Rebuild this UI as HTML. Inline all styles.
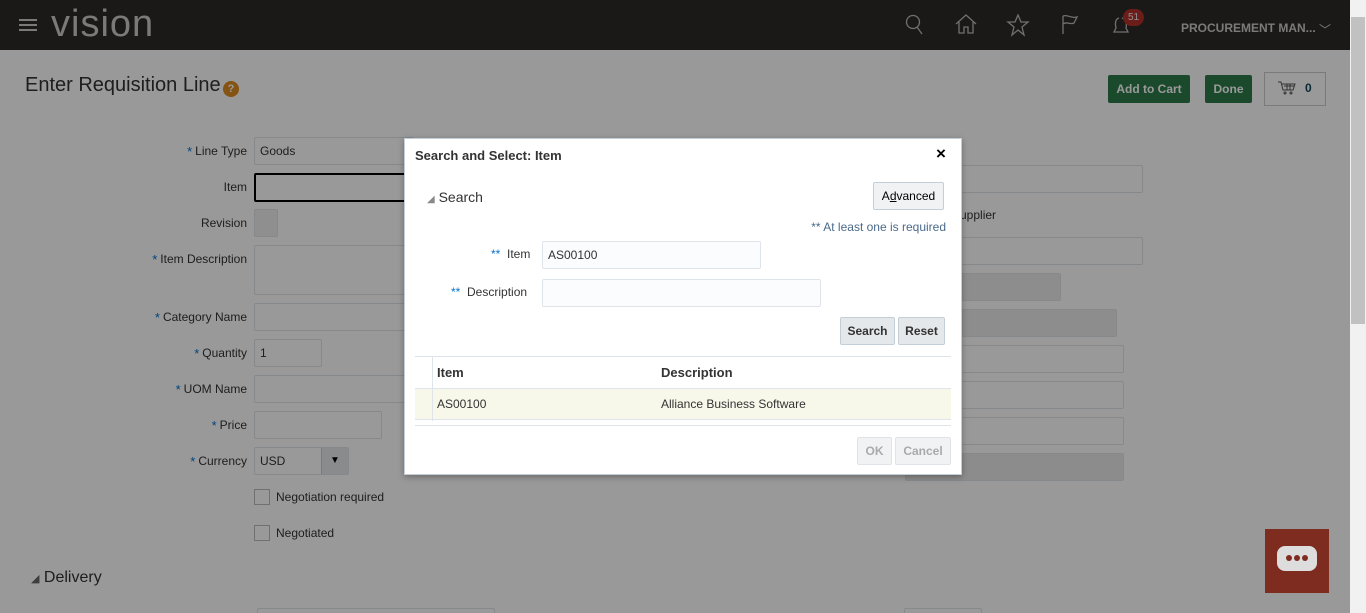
<!DOCTYPE html>
<html><head><meta charset="utf-8"><style>
*{box-sizing:border-box;margin:0;padding:0}
html,body{width:1366px;height:613px;overflow:hidden}
body{font-family:"Liberation Sans",sans-serif;background:#fff;position:relative;color:#333}
.hdr{position:absolute;left:0;top:0;width:1350px;height:50px;background:#2d2a28}
.abs{position:absolute}
.lbl{position:absolute;font-size:12px;color:#333;text-align:right;width:200px}
.lbl b{color:#0572ce;font-weight:normal;font-size:13px;vertical-align:top;margin-right:3px}
.inp{position:absolute;border:1px solid #dfe4ea;background:#fff;border-radius:2px;font-size:12px;padding:6px 5px}
.ov{position:absolute;left:0;top:0;width:1350px;height:613px;background:rgba(0,0,0,.4)}
.dlg{position:absolute;left:404px;top:138px;width:558px;height:337px;background:#fff;border:1px solid #c4ced7;box-shadow:0 2px 6px rgba(0,0,0,.3)}
.btn{position:absolute;border:1px solid #c4ced7;background:#e4e8ea;border-radius:2px;font-size:12px;font-weight:bold;color:#333;text-align:center;line-height:26px}
</style></head><body>
<div class="hdr">
 <div class="abs" style="left:19px;top:19px;width:18px;height:2px;background:#ccc;box-shadow:0 5px 0 #ccc,0 10px 0 #ccc"></div>
 <div class="abs" style="left:51px;top:2px;font-size:38px;color:#ccc;line-height:44px;letter-spacing:1px">vision</div>
 <svg class="abs" style="left:900px;top:12px" width="330" height="26" fill="none" stroke="#bbb" stroke-width="1.3">
  <circle cx="13" cy="10" r="6.5"/><path d="M17 15l5 7"/>
  <path d="M56 12l10-9 10 9M59 10v11h5v-6h4v6h5V10"/>
  <path d="M118 3l3 7h7l-6 5 2 8-6-5-6 5 2-8-6-5h7z"/>
  <path d="M163 4v18M163 4c5-2 8 3 14 1l-3 6c-4 2-7-2-11 1"/>
  <path d="M219 6c-4 1-4 6-3 10l-2 4h14l-2-4c1-4 0-9-4-10"/>
 </svg>
 <div class="abs" style="left:1123px;top:9px;width:21px;height:17px;border-radius:9px;background:#b5312a;color:#eee;font-size:10px;text-align:center;line-height:17px">51</div>
 <div class="abs" style="left:1181px;top:19px;font-size:12px;font-weight:bold;color:#ccc">PROCUREMENT MAN... <span style="font-weight:normal;position:relative;top:2px">﹀</span></div>
</div>
<div class="abs" style="left:25px;top:74px;font-size:20px;color:#333">Enter Requisition Line</div>
<div class="abs" style="left:223px;top:81px;width:16px;height:16px;border-radius:50%;background:#e08c1e;color:#fff;font-size:11px;font-weight:bold;text-align:center;line-height:16px">?</div>
<div class="abs" style="left:1108px;top:75px;width:82px;height:28px;background:#2d7a4a;border-radius:2px;color:#fff;font-size:12px;font-weight:bold;text-align:center;line-height:28px">Add to Cart</div>
<div class="abs" style="left:1205px;top:75px;width:47px;height:28px;background:#2d7a4a;border-radius:2px;color:#fff;font-size:12px;font-weight:bold;text-align:center;line-height:28px">Done</div>
<div class="abs" style="left:1264px;top:72px;width:62px;height:34px;border:1px solid #ccc;font-size:12px;font-weight:bold;color:#145;padding:8px 0 0 40px">0</div>
<svg class="abs" style="left:1277px;top:80px" width="20" height="16" fill="none" stroke="#555" stroke-width="1"><path d="M1 2h3l2 8h10l2-6H5M7 6h10M10 4v6M13 4v6"/><circle cx="8" cy="13" r="1"/><circle cx="14" cy="13" r="1"/></svg>

<div class="lbl" style="left:47px;top:144px"><b>*</b>Line Type</div><div class="inp" style="left:254px;top:137px;width:160px;height:28px">Goods</div>
<div class="lbl" style="left:47px;top:180px">Item</div><div class="inp" style="left:254px;top:173px;width:160px;height:29px;border:2px solid #000"></div>
<div class="lbl" style="left:47px;top:216px">Revision</div><div class="inp" style="left:254px;top:209px;width:24px;height:28px;background:#eee"></div>
<div class="lbl" style="left:47px;top:252px"><b>*</b>Item Description</div><div class="inp" style="left:254px;top:245px;width:160px;height:50px"></div>
<div class="lbl" style="left:47px;top:310px"><b>*</b>Category Name</div><div class="inp" style="left:254px;top:303px;width:160px;height:28px"></div>
<div class="lbl" style="left:47px;top:346px"><b>*</b>Quantity</div><div class="inp" style="left:254px;top:339px;width:68px;height:28px">1</div>
<div class="lbl" style="left:47px;top:382px"><b>*</b>UOM Name</div><div class="inp" style="left:254px;top:375px;width:160px;height:28px"></div>
<div class="lbl" style="left:47px;top:418px"><b>*</b>Price</div><div class="inp" style="left:254px;top:411px;width:128px;height:28px"></div>
<div class="lbl" style="left:47px;top:454px"><b>*</b>Currency</div><div class="inp" style="left:254px;top:447px;width:95px;height:28px">USD</div>
<div class="abs" style="left:321px;top:448px;width:27px;height:26px;background:#e4e8ea;border-left:1px solid #ccc;text-align:center;font-size:10px;line-height:26px;color:#000">▼</div>
<div class="abs" style="left:254px;top:489px;width:16px;height:16px;border:1px solid #bbb;background:#fff"></div><div class="abs" style="left:276px;top:490px;font-size:12px">Negotiation required</div>
<div class="abs" style="left:254px;top:525px;width:16px;height:16px;border:1px solid #bbb;background:#fff"></div><div class="abs" style="left:276px;top:526px;font-size:12px">Negotiated</div>
<div class="abs" style="left:31px;top:569px;font-size:16px"><span style="font-size:11px;color:#666">◢</span> Delivery</div>
<div class="inp" style="left:257px;top:608px;width:238px;height:5px;border-bottom:none"></div>
<div class="inp" style="left:904px;top:608px;width:78px;height:5px;border-bottom:none"></div>
<div class="inp" style="left:905px;top:165px;width:238px;height:28px"></div>
<div class="abs" style="left:960px;top:208px;font-size:12px">upplier</div>
<div class="inp" style="left:905px;top:237px;width:238px;height:28px"></div>
<div class="inp" style="left:905px;top:273px;width:156px;height:28px;background:#ececec"></div>
<div class="inp" style="left:905px;top:309px;width:212px;height:28px;background:#ececec"></div>
<div class="inp" style="left:905px;top:345px;width:219px;height:28px"></div>
<div class="inp" style="left:905px;top:381px;width:219px;height:28px"></div>
<div class="inp" style="left:905px;top:417px;width:219px;height:28px"></div>
<div class="inp" style="left:905px;top:453px;width:219px;height:28px;background:#eaeaea"></div>

<div class="ov"></div>
<div class="abs" style="left:1265px;top:529px;width:64px;height:64px;background:#7e2b20"></div>
<div class="abs" style="left:1277px;top:546px;width:40px;height:25px;border-radius:8px;background:#ddd"></div>
<div class="abs" style="left:1286px;top:555px;width:6px;height:6px;border-radius:50%;background:#7e2b20;box-shadow:8px 0 0 #7e2b20,16px 0 0 #7e2b20"></div>
<div class="abs" style="left:1350px;top:0;width:16px;height:613px;background:#f1f1f1"></div>
<div class="abs" style="left:1351px;top:17px;width:14px;height:307px;background:#c1c1c1"></div>

<div class="dlg">
 <div class="abs" style="left:10px;top:9px;font-size:13px;font-weight:bold;color:#333">Search and Select: Item</div>
 <div class="abs" style="left:531px;top:5px;font-size:17px;font-weight:bold;color:#000">×</div>
 <div class="abs" style="left:22px;top:50px;font-size:14px;color:#333"><span style="font-size:10px;color:#888">◢</span> Search</div>
 <div class="btn" style="left:468px;top:43px;width:71px;height:28px;background:#f0f2f3;font-weight:normal;color:#000">A<u>d</u>vanced</div>
 <div class="abs" style="right:15px;top:81px;font-size:12px;color:#4a6a8a">** At least one is required</div>
 <div class="abs" style="left:86px;top:108px;font-size:12px"><span style="color:#0572ce">**</span>&nbsp; Item</div>
 <div class="inp" style="left:137px;top:102px;width:219px;height:28px;background:#fbfcfd">AS00100</div>
 <div class="abs" style="left:46px;top:146px;font-size:12px"><span style="color:#0572ce">**</span>&nbsp; Description</div>
 <div class="inp" style="left:137px;top:140px;width:279px;height:28px;background:#fbfcfd"></div>
 <div class="btn" style="left:435px;top:178px;width:55px;height:28px">Search</div>
 <div class="btn" style="left:493px;top:178px;width:47px;height:28px">Reset</div>
 <div class="abs" style="left:10px;top:217px;width:536px;border-top:1px solid #dfe4ea"></div>
 <div class="abs" style="left:27px;top:218px;height:64px;border-left:1px solid #dfe4ea"></div>
 <div class="abs" style="left:32px;top:226px;font-size:13px;font-weight:bold">Item</div>
 <div class="abs" style="left:256px;top:226px;font-size:13px;font-weight:bold">Description</div>
 <div class="abs" style="left:10px;top:249px;width:536px;height:32px;background:#f7f8ea;border-top:1px solid #dfe4ea;border-bottom:1px solid #dfe4ea"></div>
 <div class="abs" style="left:27px;top:250px;height:30px;border-left:1px solid #dfe4ea"></div>
 <div class="abs" style="left:32px;top:258px;font-size:12px">AS00100</div>
 <div class="abs" style="left:256px;top:258px;font-size:12px">Alliance Business Software</div>
 <div class="abs" style="left:10px;top:286px;width:536px;border-top:1px solid #dfe4ea"></div>
 <div class="btn" style="left:452px;top:298px;width:35px;height:28px;background:#f0f2f3;color:#aaa;border-color:#e0e4e8">OK</div>
 <div class="btn" style="left:490px;top:298px;width:56px;height:28px;background:#f0f2f3;color:#aaa;border-color:#e0e4e8">Cancel</div>
</div>
</body></html>
